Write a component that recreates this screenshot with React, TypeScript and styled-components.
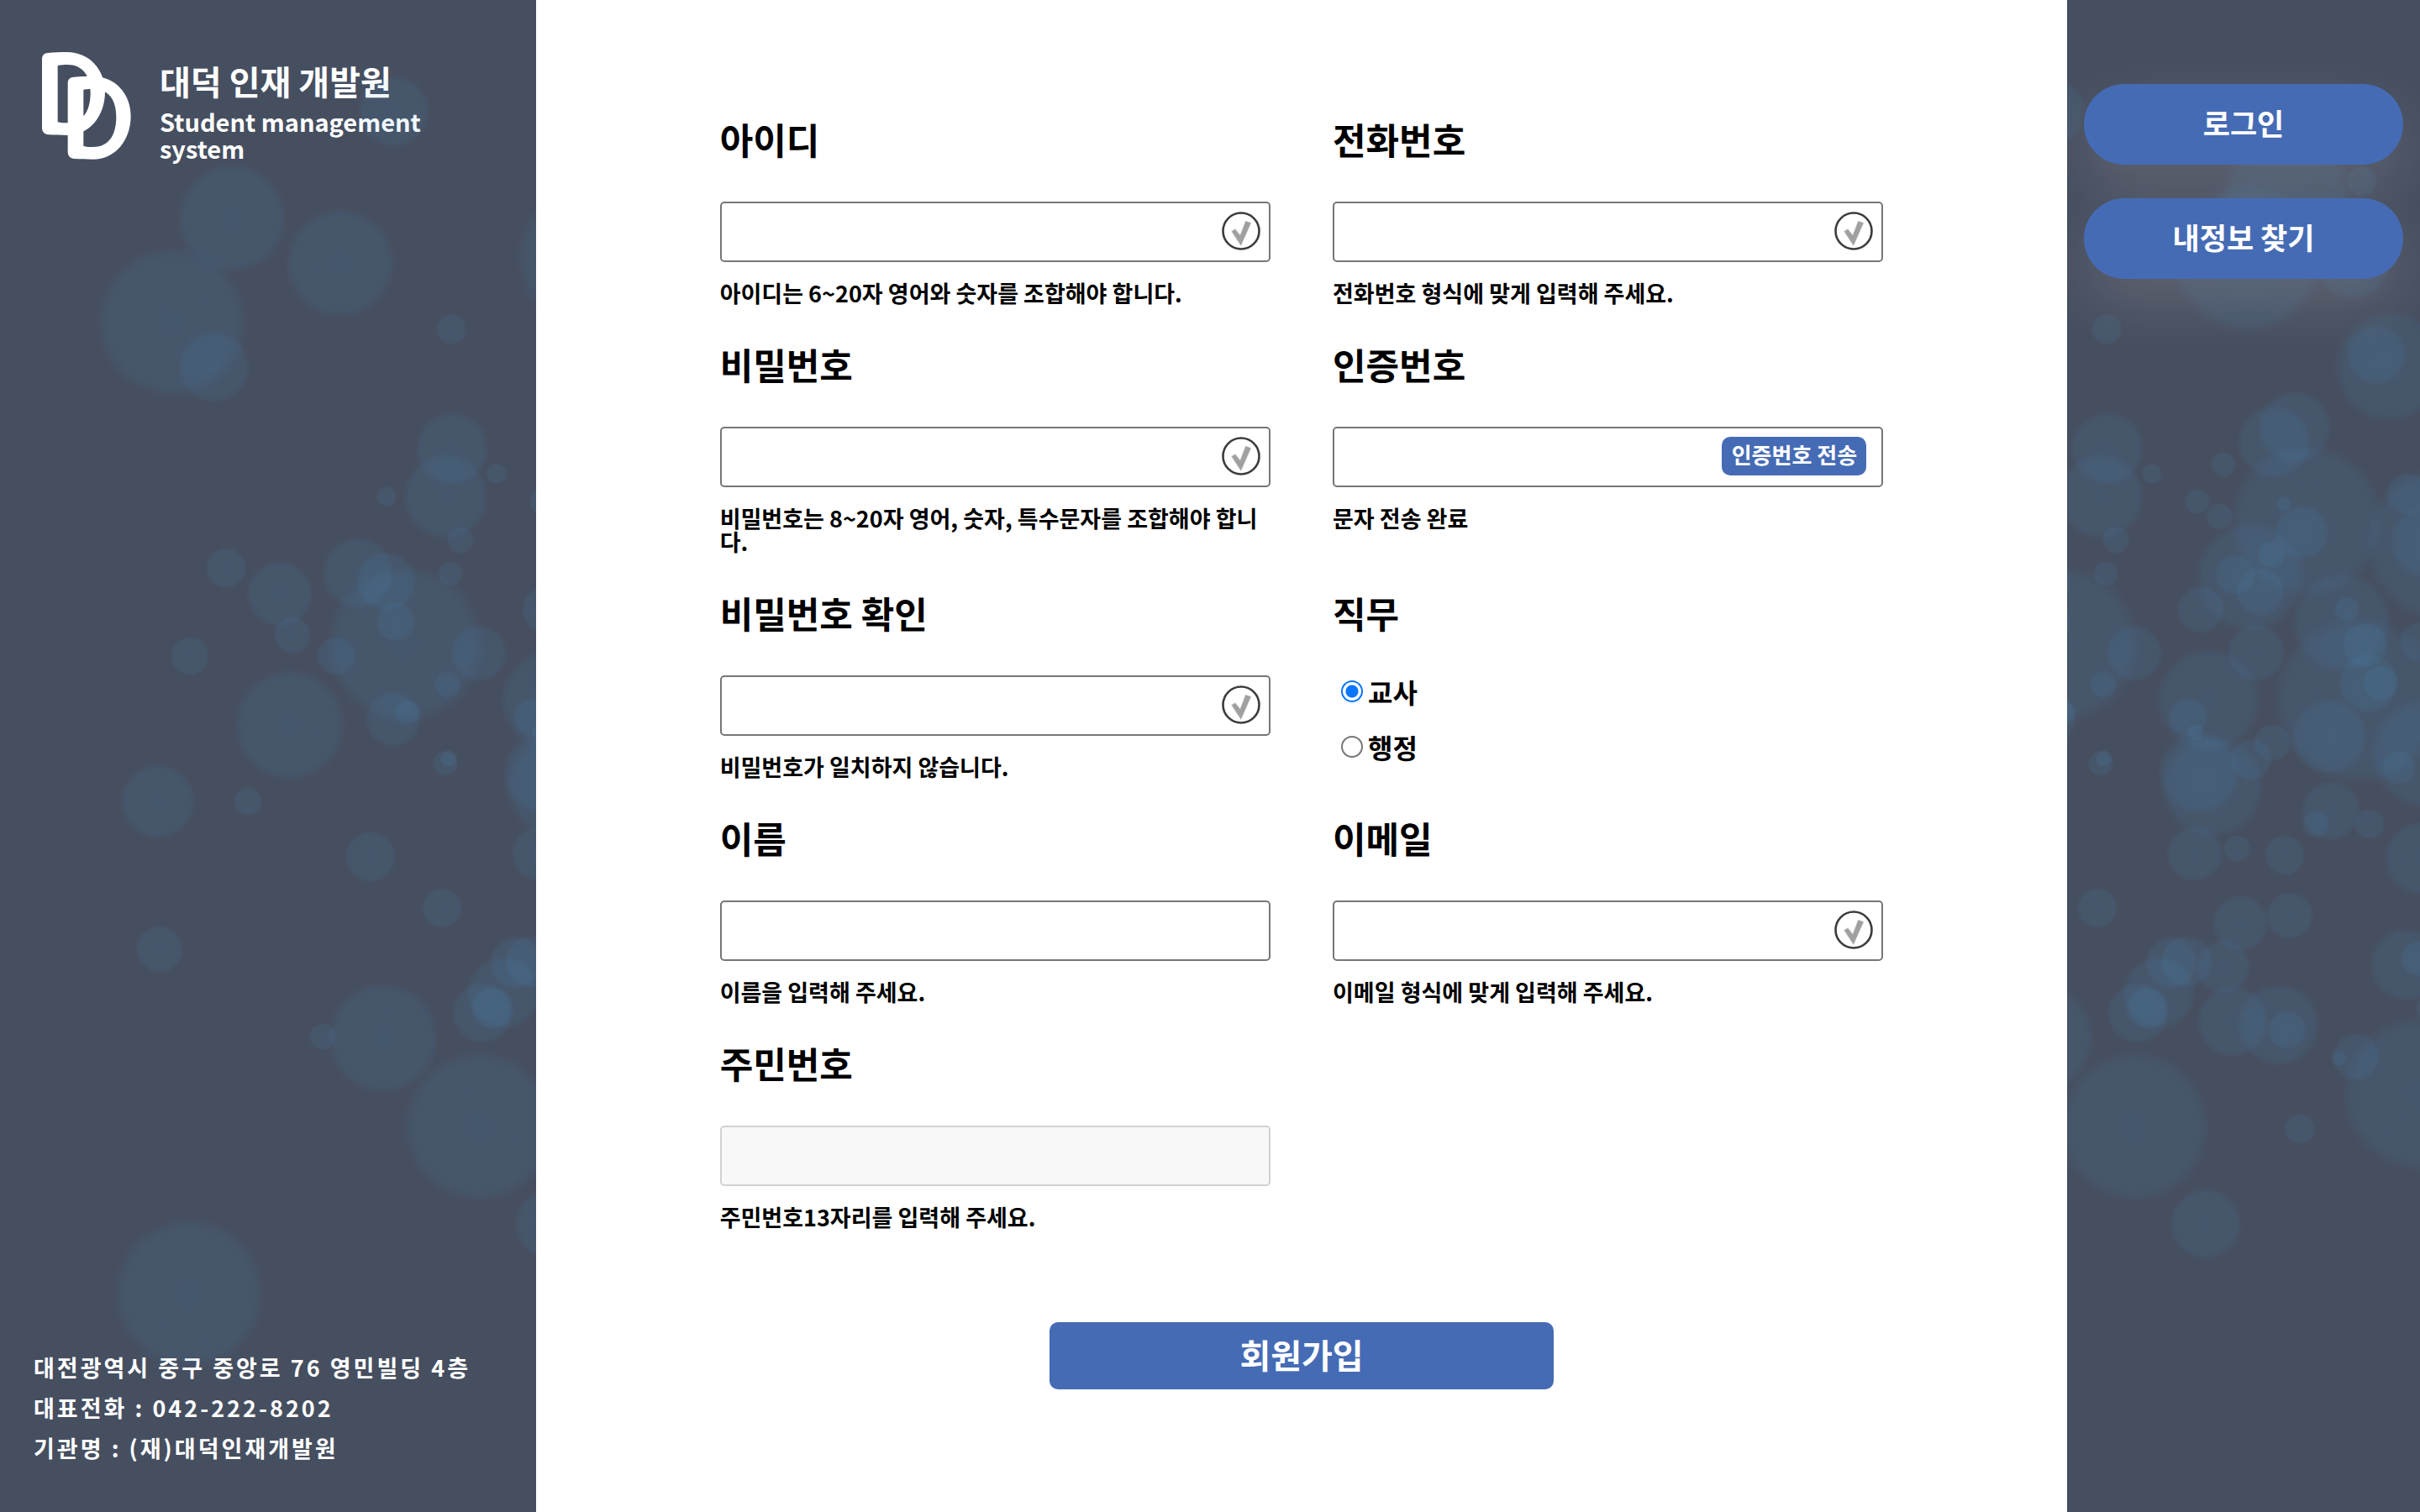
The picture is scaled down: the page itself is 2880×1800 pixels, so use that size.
import React, { useId } from 'react';
import styled, { createGlobalStyle } from 'styled-components';

const GlobalStyle = createGlobalStyle`
  * { box-sizing: border-box; }
  body {
    margin: 0;
    background: #fff;
    color: #000;
    font-family: "Noto Sans CJK KR", "Noto Sans", sans-serif;
    font-weight: 700;
  }
  button, input { font: inherit; }
`;

const Page = styled.div`
  display: grid;
  grid-template-columns: 319fr 911fr 210fr;
  min-height: 100vh;
`;

const Side = styled.aside`
  position: relative;
  display: flex;
  flex-direction: column;
  min-width: 0;
  overflow: hidden;
  background: #464f60;
  color: #fff;
`;

const BrandSide = styled(Side)`
  justify-content: space-between;
  padding: 62px 40px 52px;
`;

const ActionSide = styled(Side)`
  gap: 40px;
  padding: 100px 20px;
`;

const BubbleLayer = styled.svg`
  position: absolute;
  top: 0;
  left: 0;
  width: 920px;
  height: 1800px;
  pointer-events: none;
`;

const Brand = styled.header`
  display: flex;
  gap: 34px;
  padding-left: 10px;
`;

const Logo = styled.svg`
  flex: none;
  width: 106px;
  height: 128px;
`;

const BrandText = styled.div`
  max-width: 350px;
  padding-top: 10px;
`;

const BrandTitle = styled.h1`
  margin: 0;
  font-size: 40px;
  line-height: 48px;
`;

const BrandSubtitle = styled.p`
  margin: 8px 0 0;
  font-size: 29px;
  line-height: 32px;
`;

const Contact = styled.address`
  font-size: 27px;
  font-style: normal;
  line-height: 48px;
  letter-spacing: 3px;
`;

const ContactLine = styled.div``;

const PillButton = styled.button`
  position: relative;
  height: 96px;
  padding: 0 0 4px;
  border: 0;
  border-radius: 48px;
  background: #466bb5;
  box-shadow: 0 30px 70px rgba(255, 230, 225, 0.13);
  color: #fff;
  font-size: 35px;
  line-height: 52px;
  cursor: pointer;
`;

const Form = styled.form`
  display: flex;
  flex-direction: column;
  align-items: center;
  min-width: 0;
  padding: 141px 12% 0;
`;

const Fields = styled.div`
  display: grid;
  grid-template-columns: repeat(2, minmax(0, 1fr));
  column-gap: 74px;
  width: 100%;
`;

const Cell = styled.div<{ $column: number }>`
  grid-column: ${(p) => p.$column};
  padding-bottom: 46px;
`;

const RadioCell = styled.fieldset`
  grid-column: 2;
  min-width: 0;
  margin: 0;
  padding: 0;
  border: 0;
`;

const FieldLabel = styled.label`
  display: block;
  margin-bottom: 51px;
  font-size: 43px;
  line-height: 48px;
`;

const FieldLegend = styled.legend`
  margin-bottom: 51px;
  padding: 0;
  font-size: 43px;
  line-height: 48px;
`;

const InputBox = styled.div`
  position: relative;
`;

const TextInput = styled.input`
  display: block;
  width: 100%;
  height: 72px;
  padding: 0 72px 0 16px;
  border: 2px solid #767676;
  border-radius: 5px;
  background: #fff;
  font-size: 27px;

  &:disabled {
    border-color: #d1d1d1;
    background: #f8f8f8;
  }
`;

const CheckMark = styled.svg`
  position: absolute;
  top: 12px;
  right: 12px;
  width: 46px;
  height: 46px;
  pointer-events: none;
`;

const SendButton = styled.button`
  position: absolute;
  top: 12px;
  right: 20px;
  width: 172px;
  height: 46px;
  padding: 0 0 4px;
  border: 0;
  border-radius: 10px;
  background: #466bb5;
  color: #fff;
  font-size: 26px;
  line-height: 42px;
  cursor: pointer;
`;

const Hint = styled.p`
  margin: 23px 0 0;
  font-size: 27px;
  line-height: 28px;
`;

const RadioList = styled.div`
  display: flex;
  flex-direction: column;
  gap: 28px;
  padding-left: 10px;
`;

const RadioLabel = styled.label`
  display: flex;
  align-items: center;
  gap: 6px;
  font-size: 32px;
  line-height: 38px;
`;

const Radio = styled.input`
  appearance: none;
  width: 26px;
  height: 26px;
  margin: 0;
  border: 2px solid #767676;
  border-radius: 50%;
  background: #fff;

  &:checked {
    border-color: #0a75ff;
    background: radial-gradient(circle, #0a75ff 0 7px, #fff 8px);
  }
`;

const SubmitButton = styled.button`
  width: 100%;
  max-width: 600px;
  height: 80px;
  margin-top: 65px;
  padding: 0 0 4px;
  border: 0;
  border-radius: 10px;
  background: #466bb5;
  color: #fff;
  font-size: 40px;
  line-height: 56px;
  cursor: pointer;
`;

/* [centre x, centre y, radius] */
const bubbles: [number, number, number][] = [
  [471, 133, 41], [278, 260, 63], [407, 313, 63], [207, 383, 87], [257, 437, 41],
  [539, 392, 17], [540, 534, 42], [533, 591, 49], [593, 564, 11], [462, 591, 11],
  [707, 307, 87], [754, 236, 75], [843, 216, 17], [832, 313, 43], [876, 436, 64],
  [860, 422, 34], [763, 509, 42], [738, 526, 42], [678, 553, 14], [647, 597, 14],
  [777, 620, 89], [897, 588, 24], [750, 600, 8], [673, 615, 15], [550, 643, 15],
  [538, 683, 14], [484, 767, 91], [572, 778, 32], [535, 815, 15], [470, 856, 32],
  [487, 848, 14], [532, 909, 14], [536, 903, 9], [528, 1081, 23], [660, 834, 60],
  [636, 854, 22], [645, 872, 9], [665, 936, 59], [649, 920, 47], [651, 726, 27],
  [710, 687, 63], [771, 634, 31], [735, 660, 15], [692, 684, 23], [722, 705, 28],
  [717, 777, 33], [711, 904, 24], [736, 884, 21], [644, 1016, 32], [694, 1010, 15],
  [751, 1018, 23], [698, 1099, 32], [757, 1090, 27], [819, 741, 57], [825, 725, 14],
  [847, 768, 26], [851, 813, 34], [865, 813, 20], [838, 834, 97], [804, 877, 43],
  [918, 897, 63], [887, 914, 19], [806, 965, 34], [788, 981, 15], [852, 981, 17],
  [913, 1022, 42], [912, 764, 23], [939, 648, 90], [920, 645, 42], [896, 1148, 42],
  [910, 1141, 20], [925, 1200, 17], [911, 1302, 89], [836, 1258, 27], [815, 1260, 8],
  [769, 1344, 17], [657, 1457, 41], [572, 1341, 87], [458, 1236, 64], [576, 1206, 35],
  [601, 1182, 42], [616, 1146, 30], [634, 1145, 30], [678, 1151, 31], [588, 1200, 24],
  [689, 1216, 41], [744, 1220, 47], [754, 1226, 22], [271, 676, 23], [335, 707, 38],
  [350, 756, 21], [228, 781, 22], [428, 682, 41], [462, 692, 34], [473, 740, 22],
  [402, 781, 22], [347, 863, 64], [190, 954, 43], [297, 954, 16], [443, 1020, 29],
  [192, 1130, 27], [386, 1234, 15], [227, 1540, 87],
];

function Bubbles({ start }: { start: number }) {
  const id = useId();
  return (
    <BubbleLayer viewBox={`${start} 0 920 1800`} aria-hidden="true">
      <defs>
        <radialGradient id={id}>
          <stop offset="0" stopColor="#46a5dc" stopOpacity="0.1" />
          <stop offset="0.84" stopColor="#46a5e6" stopOpacity="0.08" />
          <stop offset="1" stopColor="#46a5e6" stopOpacity="0" />
        </radialGradient>
      </defs>
      {bubbles.map(([x, y, r]) => (
        <circle key={`${x}-${y}`} cx={x} cy={y} r={r * 1.04 + 1} fill={`url(#${id})`} />
      ))}
    </BubbleLayer>
  );
}

const letterD =
  'M60 62C60 46 68 40 82 39C105 37 125 36 148 36C230 36 285 100 285 178C285 265 230 333 150 333C125 333 105 332 84 331C68 330 60 320 60 306ZM116 84C130 81 140 81 150 81C205 81 233 120 233 180C233 235 215 288 150 289C138 289 128 289 116 286Z';

function CheckIcon() {
  return (
    <CheckMark viewBox="0 0 46 46" aria-hidden="true">
      <circle cx="23" cy="23" r="21.5" fill="none" stroke="#3c3c3c" strokeWidth="2.6" />
      <path
        d="M12 23.5L16 21L22 28.5L28.5 11.5L34.5 13.5L22.8 40Z"
        fill="#a0a0a0"
        stroke="#a0a0a0"
        strokeOpacity="0.4"
        strokeWidth="1.5"
      />
    </CheckMark>
  );
}

type FieldProps = {
  id: string;
  label: string;
  hint: string;
  column: number;
  type?: string;
  disabled?: boolean;
  children?: React.ReactNode;
};

function Field({ id, label, hint, column, type = 'text', disabled, children }: FieldProps) {
  return (
    <Cell $column={column}>
      <FieldLabel htmlFor={id}>{label}</FieldLabel>
      <InputBox>
        <TextInput id={id} type={type} disabled={disabled} aria-describedby={`${id}-hint`} />
        {children}
      </InputBox>
      <Hint id={`${id}-hint`}>{hint}</Hint>
    </Cell>
  );
}

export default function App() {
  return (
    <>
      <GlobalStyle />
      <Page>
        <BrandSide>
          <Brand>
            <Logo viewBox="60 36 318 384" role="img" aria-label="DD">
              <path d={letterD} fill="#fff" fillRule="evenodd" />
              <path d={letterD} fill="#fff" fillRule="evenodd" transform="translate(92 86)" />
            </Logo>
            <BrandText>
              <BrandTitle>대덕 인재 개발원</BrandTitle>
              <BrandSubtitle>Student management system</BrandSubtitle>
            </BrandText>
          </Brand>
          <Contact>
            <ContactLine>대전광역시 중구 중앙로 76 영민빌딩 4층</ContactLine>
            <ContactLine>대표전화 : 042-222-8202</ContactLine>
            <ContactLine>기관명 : (재)대덕인재개발원</ContactLine>
          </Contact>
          <Bubbles start={2} />
        </BrandSide>

        <Form onSubmit={(e) => e.preventDefault()}>
          <Fields>
            <Field id="user-id" column={1} label="아이디" hint="아이디는 6~20자 영어와 숫자를 조합해야 합니다.">
              <CheckIcon />
            </Field>
            <Field id="phone" column={2} type="tel" label="전화번호" hint="전화번호 형식에 맞게 입력해 주세요.">
              <CheckIcon />
            </Field>
            <Field
              id="password"
              column={1}
              type="password"
              label="비밀번호"
              hint="비밀번호는 8~20자 영어, 숫자, 특수문자를 조합해야 합니다."
            >
              <CheckIcon />
            </Field>
            <Field id="code" column={2} label="인증번호" hint="문자 전송 완료">
              <SendButton type="button">인증번호 전송</SendButton>
            </Field>
            <Field
              id="password-check"
              column={1}
              type="password"
              label="비밀번호 확인"
              hint="비밀번호가 일치하지 않습니다."
            >
              <CheckIcon />
            </Field>
            <RadioCell>
              <FieldLegend>직무</FieldLegend>
              <RadioList>
                <RadioLabel>
                  <Radio type="radio" name="job" value="teacher" defaultChecked />
                  교사
                </RadioLabel>
                <RadioLabel>
                  <Radio type="radio" name="job" value="office" />
                  행정
                </RadioLabel>
              </RadioList>
            </RadioCell>
            <Field id="name" column={1} label="이름" hint="이름을 입력해 주세요." />
            <Field id="email" column={2} type="email" label="이메일" hint="이메일 형식에 맞게 입력해 주세요.">
              <CheckIcon />
            </Field>
            <Field id="resident" column={1} label="주민번호" hint="주민번호13자리를 입력해 주세요." disabled />
          </Fields>
          <SubmitButton type="submit">회원가입</SubmitButton>
        </Form>

        <ActionSide>
          <Bubbles start={492} />
          <PillButton type="button">로그인</PillButton>
          <PillButton type="button">내정보 찾기</PillButton>
        </ActionSide>
      </Page>
    </>
  );
}
